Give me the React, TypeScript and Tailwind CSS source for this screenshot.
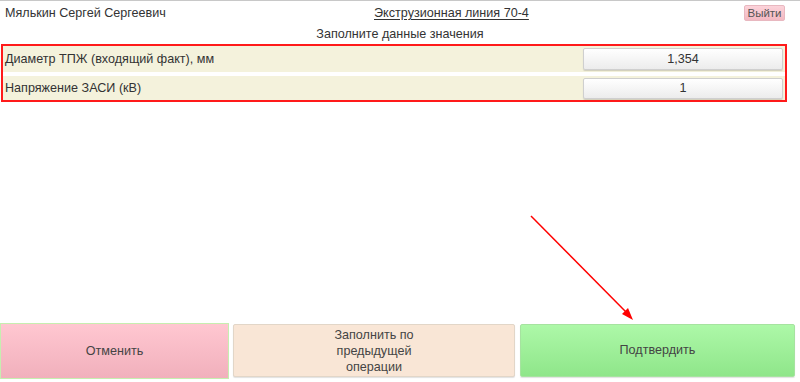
import React from "react";

export default function App() {
  const font = { fontFamily: '"Liberation Sans", Arial, sans-serif' };
  return (
    <div
      className="relative flex h-[382px] w-[800px] flex-col overflow-hidden border-t border-[#c8c8c8] bg-white text-[12.6px] text-[#333]"
      style={font}
    >
      <div className="flex h-[24px] items-center justify-between pl-[5px] pr-[15px]">
        <span className="w-[200px]">Мялькин Сергей Сергеевич</span>
        <span className="ml-[169px] underline underline-offset-2">Экструзионная линия 70-4</span>
        <button className="ml-auto h-[16px] w-[41px] rounded-[2px] border border-[#e8b8c0] bg-gradient-to-b from-[#fcd3da] to-[#f3b8c2] text-[11.5px] leading-[14px] text-[#555]">
          Выйти
        </button>
      </div>
      <div className="flex h-[19px] items-center justify-center">Заполните данные значения</div>
      <div className="ml-px w-[786px] border-2 border-[#ff1a1a] bg-white">
        <div className="flex h-[26px] items-center justify-between bg-[#f4f2dc] pl-[2px] pr-[2px]">
          <span>Диаметр ТПЖ (входящий факт), мм</span>
          <div className="flex h-[22px] w-[200px] items-center justify-center rounded-[2px] border border-[#cfcfcf] bg-gradient-to-b from-white to-[#ececec] shadow-[0_1px_1px_rgba(0,0,0,0.15)]">
            1,354
          </div>
        </div>
        <div className="h-[4px]" />
        <div className="flex h-[24px] items-center justify-between bg-[#f4f2dc] pl-[2px] pr-[2px]">
          <span>Напряжение ЗАСИ (кВ)</span>
          <div className="flex h-[21px] w-[200px] items-center justify-center rounded-[2px] border border-[#cfcfcf] bg-gradient-to-b from-white to-[#ececec] shadow-[0_1px_1px_rgba(0,0,0,0.15)]">
            1
          </div>
        </div>
      </div>
      <div className="flex-1" />
      <div className="mb-[3px] flex items-stretch">
        <button className="flex h-[56px] w-[229px] items-center justify-center border border-[#c6eeb0] bg-gradient-to-b from-[#ffc7d1] to-[#f1b0bc] text-[12.6px] text-[#444]">
          Отменить
        </button>
        <button className="ml-[4px] mt-px flex h-[53px] w-[282px] items-center justify-center rounded-[2px] border border-[#e2d6c8] bg-[#f9e6d6] text-center text-[12.6px] leading-[16px] text-[#444] shadow-[0_1px_1px_rgba(0,0,0,0.12)]">
          Заполнить по
          <br />
          предыдущей
          <br />
          операции
        </button>
        <button className="ml-[5px] mt-px flex h-[53px] w-[275px] items-center justify-center rounded-[2px] border border-[#a6e3a0] bg-gradient-to-b from-[#adf8a8] to-[#8fe68a] text-[12.6px] text-[#444] shadow-[0_1px_1px_rgba(0,0,0,0.12)]">
          Подтвердить
        </button>
      </div>
      <svg className="pointer-events-none absolute left-0 top-0" width="800" height="382">
        <line x1="531" y1="215" x2="628" y2="313" stroke="#ff0000" strokeWidth="1.5" />
        <polygon points="633,319 622,313 628,307" fill="#ff0000" />
      </svg>
    </div>
  );
}
